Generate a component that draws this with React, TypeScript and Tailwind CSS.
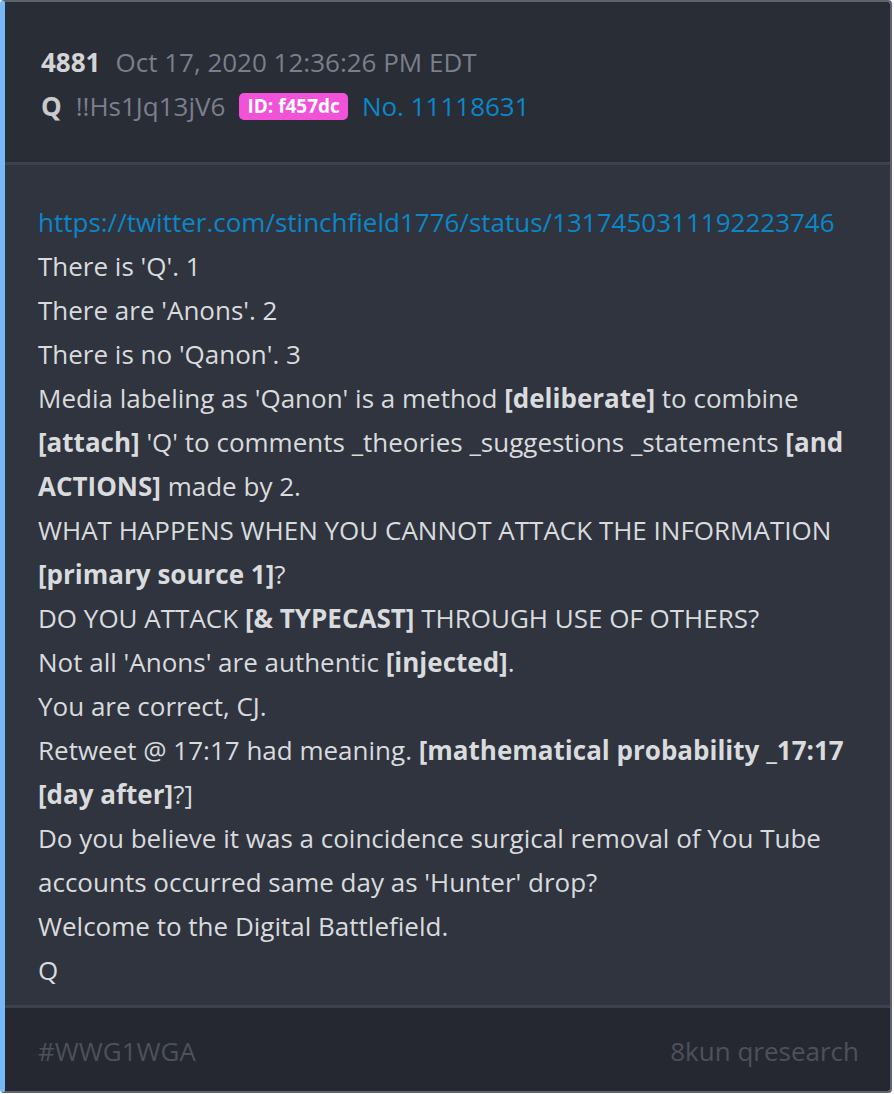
import React from 'react';

const font = { fontFamily: '"Open Sans", "Noto Sans", sans-serif' };

const Post: React.FC = () => {
  return (
    <div className="w-[894px] h-[1094px] bg-white" style={font}>
      <div className="h-[1093px] w-[892px] rounded-[4px] border-2 border-l-[5px] border-[#5d626c] border-l-[#79b8f7] overflow-hidden flex flex-col">
        <div className="bg-[#292d36] pt-[38px] pb-[34px] pl-[36px] pr-8 text-[26px] leading-[44px]">
          <div className="flex items-center">
            <span className="font-bold text-[#d4d4d6]">4881</span>
            <span className="ml-[15px] text-[#7b7f8c]">Oct 17, 2020 12:36:26 PM EDT</span>
          </div>
          <div className="flex items-center">
            <span className="font-bold text-[#c9cacc]">Q</span>
            <span className="ml-[14px] text-[#7b7f8c]">!!Hs1Jq13jV6</span>
            <span className="ml-[14px] rounded-[5px] bg-[#f152d8] px-[8px] text-[19px] font-bold leading-[27px] text-white">
              ID: f457dc
            </span>
            <span className="ml-[14px] text-[#0b87c9]">No. 11118631</span>
          </div>
        </div>
        <div className="h-[3px] bg-[#3d414b]" />
        <div className="flex-1 bg-[#2f343f] pt-[35px] pl-[33px] pr-[30px] text-[26px] leading-[44px] text-[#d9dbdd]">
          <div className="text-[#0b87c9]">https://twitter.com/stinchfield1776/status/1317450311192223746</div>
          <div>There is 'Q'. 1</div>
          <div>There are 'Anons'. 2</div>
          <div>There is no 'Qanon'. 3</div>
          <div>
            Media labeling as 'Qanon' is a method <b className="font-bold">[deliberate]</b> to combine{' '}
            <b className="font-bold">[attach]</b> 'Q' to comments _theories _suggestions _statements{' '}
            <b className="font-bold">[and ACTIONS]</b> made by 2.
          </div>
          <div>
            WHAT HAPPENS WHEN YOU CANNOT ATTACK THE INFORMATION <b className="font-bold">[primary source 1]</b>?
          </div>
          <div>
            DO YOU ATTACK <b className="font-bold">[&amp; TYPECAST]</b> THROUGH USE OF OTHERS?
          </div>
          <div>
            Not all 'Anons' are authentic <b className="font-bold">[injected]</b>.
          </div>
          <div>You are correct, CJ.</div>
          <div>
            Retweet @ 17:17 had meaning. <b className="font-bold">[mathematical probability _17:17 [day after]</b>?]
          </div>
          <div>Do you believe it was a coincidence surgical removal of You Tube accounts occurred same day as 'Hunter' drop?</div>
          <div>Welcome to the Digital Battlefield.</div>
          <div>Q</div>
        </div>
        <div className="h-[3px] bg-[#3d414b]" />
        <div className="h-[83px] bg-[#252830] pt-[4px] pl-[33px] pr-[31px] flex items-center justify-between text-[26px] text-[#4c515c]">
          <span>#WWG1WGA</span>
          <span>8kun qresearch</span>
        </div>
      </div>
    </div>
  );
};

export default function App() {
  return <Post />;
}
